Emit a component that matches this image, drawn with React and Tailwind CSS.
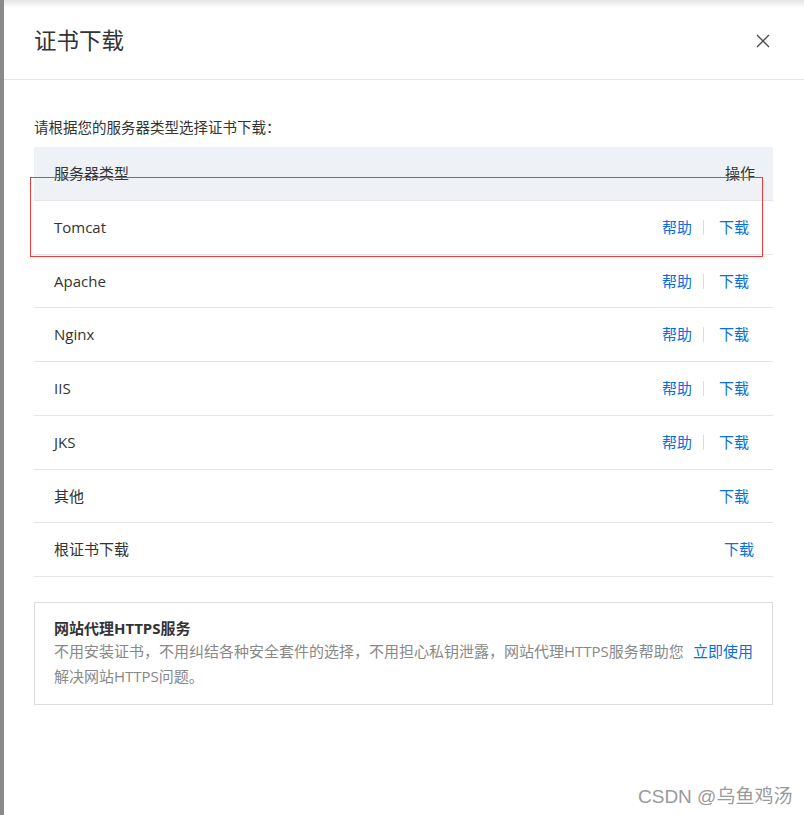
import React from "react";

const rows = [
  { name: "Tomcat", help: true, h: "h-[54px]" },
  { name: "Apache", help: true, h: "h-[53px]" },
  { name: "Nginx", help: true, h: "h-[54px]" },
  { name: "IIS", help: true, h: "h-[54px]" },
  { name: "JKS", help: true, h: "h-[54px]" },
  { name: "其他", help: false, h: "h-[53px]" },
];

export default function App() {
  return (
    <div
      className="relative flex w-[804px] h-[815px] overflow-hidden bg-white text-[#333]"
      style={{ fontFamily: '"Open Sans", "Noto Sans CJK SC", sans-serif' }}
    >
      <div className="w-[4px] shrink-0 bg-[#8a8a8a]" />
      <div className="relative flex-1 flex flex-col bg-white">
        <div className="absolute left-0 right-0 top-0 h-[8px] bg-gradient-to-b from-[#e4e4e4] to-white" />
        {/* header */}
        <div className="relative h-[80px] shrink-0 flex items-center justify-between pl-[30px] pr-[34px] border-b border-[#e5e5e5]">
          <div className="text-[22.5px] leading-[30px] text-[#333] pt-[2px]">证书下载</div>
          <svg width="14" height="14" viewBox="0 0 14 14" className="mt-[2px]">
            <path d="M1 1 L13 13 M13 1 L1 13" stroke="#4a4a4a" strokeWidth="1.3" fill="none" />
          </svg>
        </div>
        <div className="pl-[30px] pr-[31px] flex flex-col">
          <div className="mt-[38px] text-[14.5px] leading-[20px] text-[#333]">请根据您的服务器类型选择证书下载：</div>
          <div className="mt-[9px] flex flex-col text-[15px]">
            <div className="h-[54px] flex items-center justify-between bg-[#eef1f6] border-b border-[#e3e5e8] pl-[20px] pr-[18px]">
              <span>服务器类型</span>
              <span>操作</span>
            </div>
            {rows.map((r) => (
              <div
                key={r.name}
                className={`${r.h} flex items-center justify-between border-b border-[#e5e5e5] pl-[20px] pr-[24px]`}
              >
                <span>{r.name}</span>
                <div className="flex items-center text-[#0a6ee0]">
                  <span className={r.help ? "" : "invisible"}>帮助</span>
                  <span className={`ml-[11px] mr-[15px] w-px h-[15px] ${r.help ? "bg-[#dcdcdc]" : "bg-transparent"}`} />
                  <span>下载</span>
                </div>
              </div>
            ))}
            <div className="h-[54px] flex items-center justify-between border-b border-[#e5e5e5] pl-[20px] pr-[19px]">
              <span>根证书下载</span>
              <span className="text-[#0a6ee0]">下载</span>
            </div>
          </div>
          <div className="mt-[25px] h-[103px] border border-[#dddddd] px-[19px] pt-[14px]">
            <div className="text-[15px] leading-[22px] font-bold text-[#333]">网站代理HTTPS服务</div>
            <div className="flex text-[15px] leading-[25px]">
              <div className="flex-1 text-[#888]">
                不用安装证书，不用纠结各种安全套件的选择，不用担心私钥泄露，网站代理HTTPS服务帮助您
                <br />
                解决网站HTTPS问题。
              </div>
              <span className="shrink-0 ml-[8px] text-[#0a6ee0] text-[15px]">立即使用</span>
            </div>
          </div>
        </div>
      </div>
      {/* annotation */}
      <div className="absolute left-[30px] top-[177px] w-[733px] h-[80px] border border-[#ee3b3b] pointer-events-none" />
      <div
        className="absolute left-[638px] top-[784px] text-[19px] leading-[26px] text-[#9a9a9a]"
        style={{ fontFamily: '"Liberation Sans", "Noto Sans CJK SC", sans-serif', textShadow: "0 0 2px #fff, 0 0 1px #fff" }}
      >
        CSDN @乌鱼鸡汤
      </div>
    </div>
  );
}
